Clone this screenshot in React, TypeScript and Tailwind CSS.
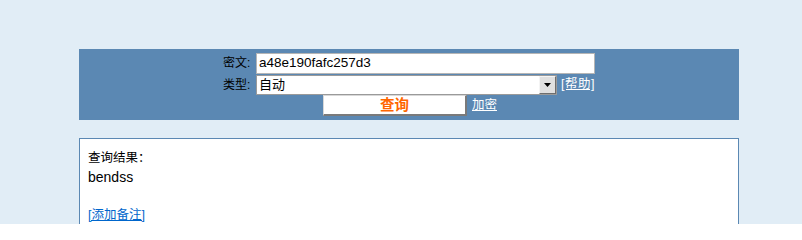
import React from "react";

const cjk = { fontFamily: '"Liberation Sans", "Noto Sans CJK SC", sans-serif' };

export default function App() {
  return (
    <div className="h-[224px] overflow-hidden bg-[#e1edf6] pt-[49px] text-[12px] text-black" style={cjk}>
      <div className="ml-[79px] w-[660px] bg-[#5b88b3] pt-[3px] pb-[4px] flex flex-col items-center">
        <div className="flex items-center h-[22px] w-[372px]">
          <span className="w-[33px] leading-none">密文:</span>
          <div className="w-[339px] h-[21px] bg-white border border-[#b5b5b5] flex items-center pl-[2px] text-[13.5px] leading-none">
            a48e190fafc257d3
          </div>
        </div>
        <div className="flex items-center h-[21px] w-[372px]">
          <span className="w-[33px] leading-none">类型:</span>
          <div className="w-[301px] h-[20px] bg-white border border-[#9a9a9a] flex items-center justify-between">
            <span className="pl-[2px] text-[13px] leading-none">自动</span>
            <div className="w-[17px] h-[18px] bg-[#e0e0e0] border border-[#6e6e6e] border-t-[#f4f4f4] border-l-[#f4f4f4] flex items-center justify-center">
              <svg width="7" height="4" viewBox="0 0 7 4">
                <path d="M0 0h7L3.5 4z" fill="#000" />
              </svg>
            </div>
          </div>
          <a href="#" className="ml-[4px] text-white underline text-[12.5px] tracking-[0.5px] leading-none">[帮助]</a>
        </div>
        <div className="flex items-center h-[21px] pl-[2px]">
          <div className="w-[144px] h-[21px] bg-white border-t border-l border-[#d8d8d8] border-r-2 border-b-2 border-r-[#7a7a7a] border-b-[#7a7a7a] flex items-center justify-center">
            <span className="text-[#ff6600] font-bold text-[14.5px] leading-none">查询</span>
          </div>
          <a href="#" className="ml-[5px] text-white underline text-[12.5px] leading-none">加密</a>
        </div>
      </div>
      <div className="ml-[79px] mt-[18px] w-[660px] h-[120px] bg-white border border-[#5b88b3] pt-[10px] pl-[8px] leading-[19px]">
        <div className="text-[12.5px]">查询结果：</div>
        <div className="text-[14px]">bendss</div>
        <div>&nbsp;</div>
        <a href="#" className="text-[#0066cc] underline text-[12.5px]">[添加备注]</a>
      </div>
    </div>
  );
}
